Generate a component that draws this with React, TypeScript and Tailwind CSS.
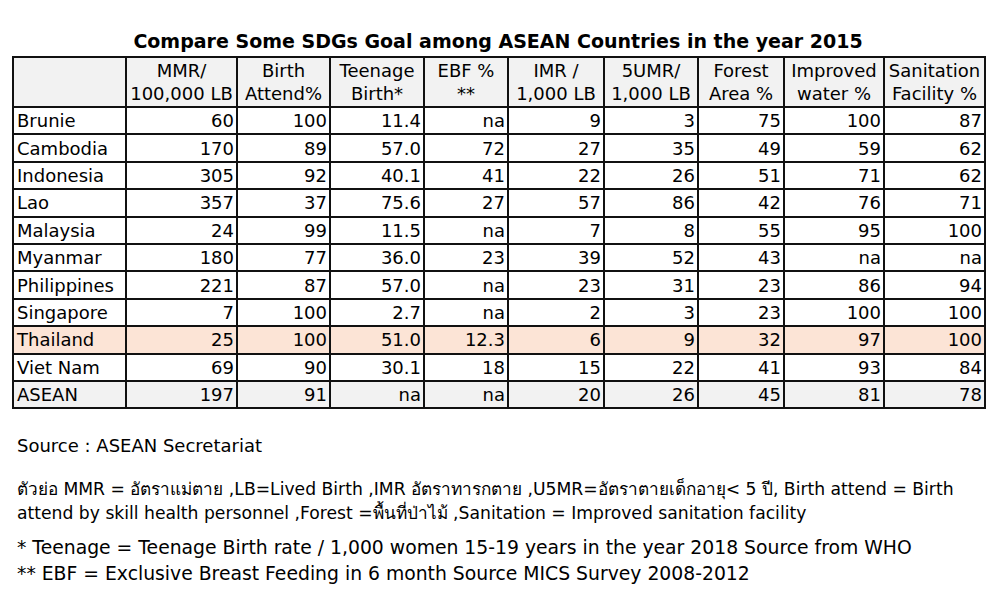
import React from 'react';

const font = { fontFamily: '"DejaVu Sans", "Noto Sans", sans-serif' };

const cols = [113, 111, 93, 94, 84, 96, 94, 86, 100, 101];

const headers = [
  ['', ''],
  ['MMR/', '100,000 LB'],
  ['Birth', 'Attend%'],
  ['Teenage', 'Birth*'],
  ['EBF %', '**'],
  ['IMR /', '1,000 LB'],
  ['5UMR/', '1,000 LB'],
  ['Forest', 'Area %'],
  ['Improved', 'water %'],
  ['Sanitation', 'Facility %'],
];

const rows: string[][] = [
  ['Brunie', '60', '100', '11.4', 'na', '9', '3', '75', '100', '87'],
  ['Cambodia', '170', '89', '57.0', '72', '27', '35', '49', '59', '62'],
  ['Indonesia', '305', '92', '40.1', '41', '22', '26', '51', '71', '62'],
  ['Lao', '357', '37', '75.6', '27', '57', '86', '42', '76', '71'],
  ['Malaysia', '24', '99', '11.5', 'na', '7', '8', '55', '95', '100'],
  ['Myanmar', '180', '77', '36.0', '23', '39', '52', '43', 'na', 'na'],
  ['Philippines', '221', '87', '57.0', 'na', '23', '31', '23', '86', '94'],
  ['Singapore', '7', '100', '2.7', 'na', '2', '3', '23', '100', '100'],
  ['Thailand', '25', '100', '51.0', '12.3', '6', '9', '32', '97', '100'],
  ['Viet Nam', '69', '90', '30.1', '18', '15', '22', '41', '93', '84'],
  ['ASEAN', '197', '91', 'na', 'na', '20', '26', '45', '81', '78'],
];

function rowBg(name: string) {
  if (name === 'Thailand') return 'bg-[#fce4d6]';
  if (name === 'ASEAN') return 'bg-[#f2f2f2]';
  return 'bg-white';
}

export default function App() {
  return (
    <div className="w-[1000px] h-[601px] bg-white text-black overflow-hidden" style={font}>
      <div className="pt-[28px] pl-[12px]">
        <h1 className="w-[972px] text-center font-bold text-[19px] leading-[26px]">
          Compare Some SDGs Goal among ASEAN Countries in the year 2015
        </h1>
        <table className="border-collapse border-[2.5px] border-[#111] table-fixed text-[18px] mt-[2px]">
          <colgroup>
            {cols.map((w, i) => (
              <col key={i} style={{ width: w }} />
            ))}
          </colgroup>
          <thead>
            <tr className="bg-[#f2f2f2] h-[50px]">
              {headers.map((h, i) => (
                <th key={i} className="border-2 border-[#111] font-normal text-center leading-[23px] px-0 py-0">
                  <div>{h[0]}</div>
                  <div>{h[1]}</div>
                </th>
              ))}
            </tr>
          </thead>
          <tbody>
            {rows.map((r) => (
              <tr key={r[0]} className={`${rowBg(r[0])} h-[27.4px]`}>
                {r.map((c, i) => (
                  <td
                    key={i}
                    className={`border-2 border-[#111] leading-[23px] py-0 ${i === 0 ? 'text-left pl-[3px]' : 'text-right pr-[2px]'}`}
                  >
                    {c}
                  </td>
                ))}
              </tr>
            ))}
          </tbody>
        </table>
      </div>
      <div className="pl-[17px] mt-[24px]">
        <p className="text-[18px] leading-[26px]">Source : ASEAN Secretariat</p>
        <p className="text-[17.2px] leading-[24px] mt-[18px] whitespace-nowrap">
          ตัวย่อ MMR = อัตราแม่ตาย ,LB=Lived Birth ,IMR อัตราทารกตาย ,U5MR=อัตราตายเด็กอายุ&lt; 5 ปี, Birth attend = Birth
          <br />
          attend by skill health personnel ,Forest =พื้นที่ป่าไม้ ,Sanitation = Improved sanitation facility
        </p>
        <p className="text-[18.8px] leading-[26px] mt-[10px]">
          * Teenage = Teenage Birth rate / 1,000 women 15-19 years in the year 2018 Source from WHO
        </p>
        <p className="text-[18.8px] leading-[26px]">
          ** EBF = Exclusive Breast Feeding in 6 month Source MICS Survey 2008-2012
        </p>
      </div>
    </div>
  );
}
